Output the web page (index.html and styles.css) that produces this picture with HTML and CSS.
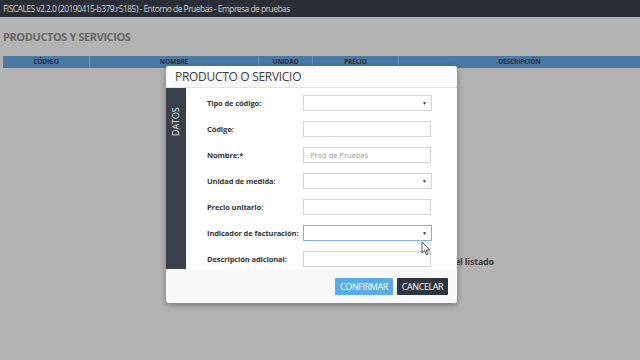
FILE: index.html
```html
<!DOCTYPE html>
<html lang="es">
<head>
  <meta charset="UTF-8">
  <meta name="viewport" content="width=device-width, initial-scale=1.0">
  <title>Productos y servicios</title>
  <link rel="stylesheet" href="styles.css">
</head>
<body>
  <div class="topbar">FISCALES v2.2.0 (20190415-b379.r5185) - Entorno de Pruebas - Empresa de pruebas</div>

  <div class="page">
    <h2 class="page-title">PRODUCTOS Y SERVICIOS</h2>
    <div class="grid-head">
      <div class="col col-codigo">CÓDIGO</div>
      <div class="col col-nombre">NOMBRE</div>
      <div class="col col-unidad">UNIDAD</div>
      <div class="col col-precio">PRECIO</div>
      <div class="col col-desc">DESCRIPCIÓN</div>
    </div>
    <p class="empty">el listado</p>
  </div>

  <div class="backdrop">
    <div class="modal">
      <div class="modal-header">PRODUCTO O SERVICIO</div>
      <div class="modal-body">
        <div class="side-tab"><span>DATOS</span></div>
        <div class="form">
          <div class="row">
            <span class="label">Tipo de código:</span>
            <div class="select"><span class="arrow">▼</span></div>
          </div>
          <div class="row">
            <span class="label">Código:</span>
            <div class="field"></div>
          </div>
          <div class="row">
            <span class="label">Nombre:*</span>
            <div class="field"><span class="placeholder">Prod de Pruebas</span></div>
          </div>
          <div class="row">
            <span class="label">Unidad de medida:</span>
            <div class="select"><span class="arrow">▼</span></div>
          </div>
          <div class="row">
            <span class="label">Precio unitario:</span>
            <div class="field"></div>
          </div>
          <div class="row">
            <span class="label">Indicador de facturación:</span>
            <div class="select focused"><span class="arrow">▼</span></div>
          </div>
          <div class="row">
            <span class="label">Descripción adicional:</span>
            <div class="field"></div>
          </div>
        </div>
      </div>
      <div class="modal-footer">
        <button class="btn btn-confirm">CONFIRMAR</button>
        <button class="btn btn-cancel">CANCELAR</button>
      </div>
    </div>
  </div>

  <svg class="cursor" width="10" height="16" viewBox="0 0 10 16">
    <path d="M1 1 L1 12 L3.6 9.6 L5.4 13.8 L7 13.1 L5.3 9 L8.8 9 Z" fill="#fff" stroke="#222" stroke-width="0.8" stroke-linejoin="round"/>
  </svg>
</body>
</html>
```

FILE: styles.css
```css
html, body {
  margin: 0;
  padding: 0;
}

body {
  width: 640px;
  height: 360px;
  overflow: hidden;
  background-color: #b3b3b3;
  font-family: 'Open Sans', sans-serif;
  position: relative;
}

.topbar {
  height: 17px;
  line-height: 17px;
  background-color: #2a2f37;
  color: #c9ccd1;
  font-size: 8.5px;
  letter-spacing: -0.55px;
  padding-left: 3px;
  white-space: nowrap;
}

.page {
  padding-left: 3px;
}

.page-title {
  margin: 0;
  padding-top: 13px;
  height: 26px;
  font-size: 11px;
  letter-spacing: -0.4px;
  font-weight: bold;
  color: #676767;
  line-height: 14px;
}

.grid-head {
  display: flex;
  height: 12px;
  background-color: #4a79a4;
}

.col {
  font-size: 6.5px;
  font-weight: bold;
  color: #1d2d46;
  line-height: 12px;
  text-align: center;
  letter-spacing: -0.1px;
  border-right: 1px solid #6b93b8;
  box-sizing: border-box;
}

.col-codigo { width: 87px; }
.col-nombre { width: 169px; }
.col-unidad { width: 54px; }
.col-precio { width: 86px; }
.col-desc { flex: 1; border-right: none; }

.empty {
  margin: 187px 0 0 0;
  padding-left: 452px;
  font-size: 9px;
  font-weight: bold;
  color: #3c3c3c;
  letter-spacing: -0.2px;
  white-space: nowrap;
}

/* modal */
.backdrop {
  position: absolute;
  top: 0;
  left: 0;
  right: 0;
  bottom: 0;
  padding: 66px 0 0 166px;
}

.modal {
  width: 291px;
  background-color: #ffffff;
  border-radius: 3px;
  box-shadow: 0 2px 6px rgba(0, 0, 0, 0.35);
  overflow: hidden;
}

.modal-header {
  height: 21px;
  line-height: 21px;
  padding-left: 9px;
  font-size: 12px;
  letter-spacing: -0.3px;
  color: #3f3f3f;
  background-color: #fafafa;
  border-bottom: 1px solid #e2e2e2;
}

.modal-body {
  display: flex;
  height: 181px;
}

.side-tab {
  width: 20px;
  flex-shrink: 0;
  background-color: #3a4049;
  display: flex;
  justify-content: center;
  padding-top: 18px;
  box-sizing: border-box;
}

.side-tab span {
  writing-mode: vertical-rl;
  transform: rotate(180deg);
  color: #e4e6e9;
  font-size: 9px;
  letter-spacing: -0.1px;
  height: 30px;
  line-height: 20px;
}

.form {
  width: 250px;
  padding: 7px 0 0 21px;
  box-sizing: border-box;
  display: flex;
  flex-direction: column;
  gap: 10px;
}

.row {
  display: flex;
  align-items: center;
  height: 16px;
}

.label {
  width: 96px;
  flex-shrink: 0;
  font-size: 7.5px;
  font-weight: bold;
  color: #333;
  letter-spacing: -0.1px;
  white-space: nowrap;
}

.field,
.select {
  width: 128px;
  height: 16px;
  flex-shrink: 0;
  box-sizing: border-box;
  border: 1px solid #d2d2d2;
  background-color: #fff;
  padding: 0 6px;
  display: flex;
  align-items: center;
}

.select {
  width: 129px;
  justify-content: flex-end;
  padding-right: 4px;
}

.select.focused {
  border-color: #87aee0;
}

.placeholder {
  font-size: 7.5px;
  color: #9a9a9a;
}

.arrow {
  font-size: 5px;
  color: #333;
}

.modal-footer {
  height: 34px;
  display: flex;
  justify-content: flex-end;
  align-items: center;
  gap: 4px;
  padding-right: 9px;
  background-color: #f8f8f8;
}

.btn {
  height: 17px;
  border: none;
  border-radius: 1px;
  font-family: 'Open Sans', sans-serif;
  font-size: 9px;
  letter-spacing: -0.4px;
  color: #fff;
  padding: 0;
  cursor: pointer;
}

.btn-confirm {
  width: 58px;
  background-color: #5aabea;
}

.btn-cancel {
  width: 51px;
  background-color: #2f353e;
}

.cursor {
  position: absolute;
  left: 421px;
  top: 241px;
}
```
